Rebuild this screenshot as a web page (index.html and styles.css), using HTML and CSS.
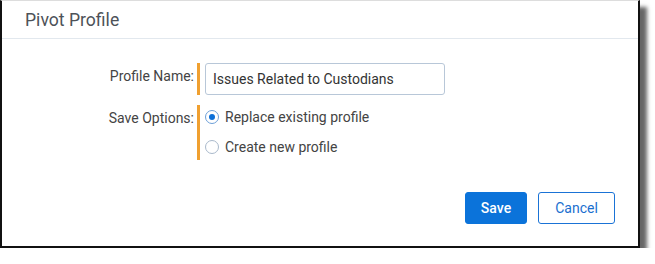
FILE: index.html
```html
<!DOCTYPE html>
<html>
<head>
<meta charset="utf-8">
<link rel="stylesheet" href="styles.css">
</head>
<body>
<div class="dialog">
  <div class="header">Pivot Profile</div>
  <div class="form">
    <div class="label">Profile Name:</div>
    <div class="control">
      <div class="input">Issues Related to Custodians</div>
    </div>
    <div class="label">Save Options:</div>
    <div class="control options">
      <div class="option"><span class="radio checked"></span><span>Replace existing profile</span></div>
      <div class="option"><span class="radio"></span><span>Create new profile</span></div>
    </div>
  </div>
  <div class="actions">
    <button class="btn primary">Save</button>
    <button class="btn secondary">Cancel</button>
  </div>
</div>
</body>
</html>
```
FILE: styles.css
```css
html, body {
  margin: 0;
  padding: 0;
  background: #fff;
}
body {
  font-family: Roboto, "Liberation Sans", sans-serif;
  color: #444;
}
.dialog {
  box-sizing: border-box;
  width: 640px;
  height: 248px;
  border: 2px solid #111;
  border-top: 1px solid #ddd;
  background: #fff;
  box-shadow: 7px 7px 4px rgba(0, 0, 0, 0.6);
  display: flex;
  flex-direction: column;
}
.header {
  font-size: 17.6px;
  line-height: 20px;
  color: #4d5258;
  padding: 9px 23px 8px;
  border-bottom: 1px solid #e2e8ee;
}
.form {
  display: grid;
  grid-template-columns: 195px auto;
  row-gap: 10px;
  margin-top: 24px;
}
.label {
  font-size: 14px;
  line-height: 24px;
  text-align: right;
  padding-right: 3px;
  padding-top: 1px;
  color: #444;
}
.control {
  border-left: 3px solid #f0a030;
  padding-left: 5px;
}
.input {
  box-sizing: border-box;
  width: 240px;
  height: 32px;
  border: 1px solid #b8c7d8;
  border-radius: 3px;
  font-size: 14px;
  line-height: 30px;
  padding-left: 7px;
  color: #333;
}
.options {
  display: flex;
  flex-direction: column;
  gap: 6px;
  padding-bottom: 1px;
}
.option {
  display: flex;
  align-items: center;
  gap: 6px;
  height: 24px;
  font-size: 14px;
  color: #444;
}
.radio {
  box-sizing: border-box;
  width: 14px;
  height: 14px;
  border-radius: 50%;
  border: 1px solid #a9b9cb;
  background: #fff;
  display: flex;
  align-items: center;
  justify-content: center;
}
.radio.checked {
  border-color: #6d9fd8;
}
.radio.checked::after {
  content: "";
  width: 6px;
  height: 6px;
  border-radius: 50%;
  background: #0b6fd8;
}
.actions {
  display: flex;
  justify-content: flex-end;
  gap: 11px;
  padding-right: 23px;
  margin-top: 32px;
}
.btn {
  box-sizing: border-box;
  height: 32px;
  border-radius: 3px;
  font-family: Roboto, "Liberation Sans", sans-serif;
  font-size: 14px;
  padding: 0;
}
.primary {
  width: 62px;
  background: #0b73da;
  border: 1px solid #0b73da;
  color: #fff;
  font-weight: 500;
}
.secondary {
  width: 77px;
  background: #fff;
  border: 1px solid #1a73d6;
  color: #1a6fcf;
}
```
